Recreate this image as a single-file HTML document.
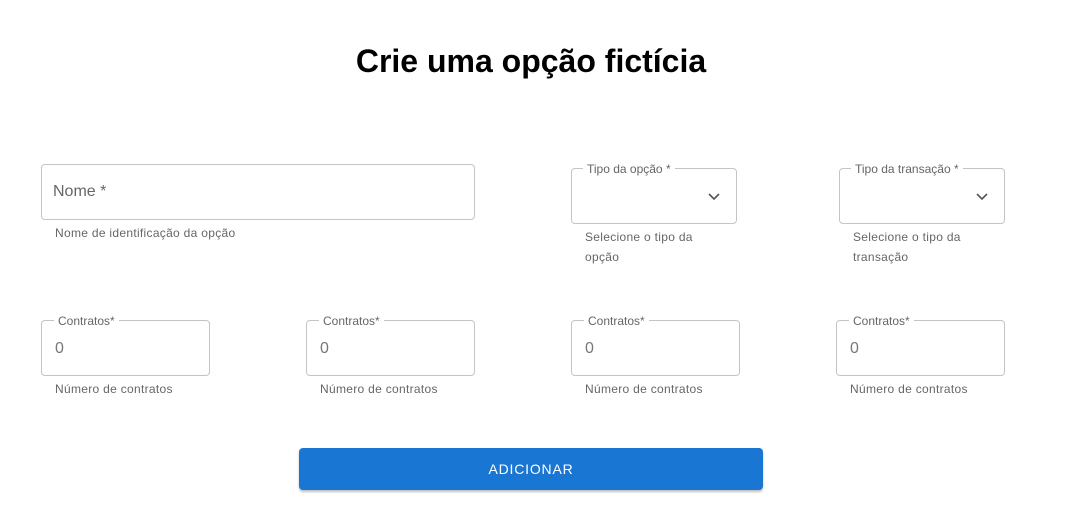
<!DOCTYPE html>
<html><head><meta charset="utf-8"><style>
body{margin:0;width:1069px;height:519px;background:#fff;font-family:"Liberation Sans",sans-serif;position:relative;overflow:hidden}
.a{position:absolute}
h1{position:absolute;left:0;width:1062px;text-align:center;top:43px;margin:0;font-size:32px;font-weight:bold;color:#000}
.box{position:absolute;border:1px solid #c4c4c4;border-radius:4px;box-sizing:border-box}
.lg{position:absolute;top:-7px;background:#fff;padding:0 4px;font-size:12px;color:#666;line-height:14px;white-space:nowrap}
.help{position:absolute;font-size:12px;color:#666;line-height:20px;letter-spacing:.3px}
.val{position:absolute;left:13px;top:18px;font-size:16px;color:#777;line-height:20px}
.btn{position:absolute;left:299px;top:448px;width:464px;height:42px;background:#1976d2;border-radius:4px;color:#fff;font-size:14px;letter-spacing:.8px;text-align:center;line-height:42px;box-shadow:0 2px 2px rgba(0,0,0,.25)}
</style></head><body>
<h1>Crie uma opção fictícia</h1>

<div class="box" style="left:41px;top:164px;width:434px;height:56px"><div class="val" style="left:11px;top:17px;color:#666">Nome *</div></div>
<div class="help" style="left:55px;top:223px">Nome de identificação da opção</div>

<div class="box" style="left:571px;top:168px;width:166px;height:56px"><div class="lg" style="left:11px">Tipo da opção *</div>
<svg class="a" style="left:135px;top:23px" width="14" height="10" viewBox="0 0 14 10"><path d="M2 2 L7 7 L12 2" fill="none" stroke="#555" stroke-width="1.6"/></svg></div>
<div class="help" style="left:585px;top:227px">Selecione o tipo da<br>opção</div>

<div class="box" style="left:839px;top:168px;width:166px;height:56px"><div class="lg" style="left:11px">Tipo da transação *</div>
<svg class="a" style="left:135px;top:23px" width="14" height="10" viewBox="0 0 14 10"><path d="M2 2 L7 7 L12 2" fill="none" stroke="#555" stroke-width="1.6"/></svg></div>
<div class="help" style="left:853px;top:227px">Selecione o tipo da<br>transação</div>

<div class="box" style="left:41px;top:320px;width:169px;height:56px"><div class="lg" style="left:12px">Contratos*</div><div class="val">0</div></div>
<div class="help" style="left:55px;top:379px">Número de contratos</div>
<div class="box" style="left:306px;top:320px;width:169px;height:56px"><div class="lg" style="left:12px">Contratos*</div><div class="val">0</div></div>
<div class="help" style="left:320px;top:379px">Número de contratos</div>
<div class="box" style="left:571px;top:320px;width:169px;height:56px"><div class="lg" style="left:12px">Contratos*</div><div class="val">0</div></div>
<div class="help" style="left:585px;top:379px">Número de contratos</div>
<div class="box" style="left:836px;top:320px;width:169px;height:56px"><div class="lg" style="left:12px">Contratos*</div><div class="val">0</div></div>
<div class="help" style="left:850px;top:379px">Número de contratos</div>

<div class="btn">ADICIONAR</div>
</body></html>
